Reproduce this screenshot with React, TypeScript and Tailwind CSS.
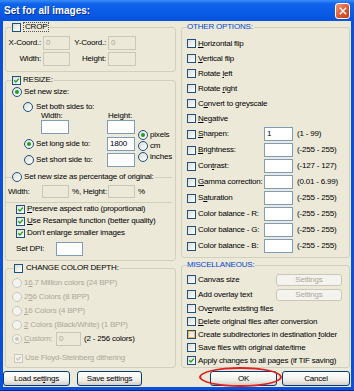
import React from 'react';

// --- SMALL XP CONTROLS ---
type BoxProps = { checked?: boolean; disabled?: boolean; hover?: boolean };

const U = ({ children }: { children: React.ReactNode }) => (
    <span className="underline underline-offset-[1px] decoration-[0.5px]">{children}</span>
);

const CheckBox = ({ checked, disabled, hover }: BoxProps) => (
    <span
        className={`relative block w-[9px] h-[9px] shrink-0 border ${
            disabled ? 'border-[#CAC8BB] bg-[#F4F3EE]' : 'border-[#1C5180] bg-[linear-gradient(135deg,#DCDCD7,#FFFFFF)]'
        }`}
    >
        {hover && <span className="absolute inset-0 border border-[#F5B54A]" />}
        {checked && (
            <svg viewBox="0 0 7 7" className="absolute left-0 top-0 w-[7px] h-[7px]">
                <path d="M1.2 3.3 L2.9 5 L5.9 1.6" fill="none" stroke={disabled ? '#C8C6B8' : '#21A121'} strokeWidth="1.4" />
            </svg>
        )}
    </span>
);

const Radio = ({ checked, disabled }: BoxProps) => (
    <span
        className={`flex items-center justify-center w-[10px] h-[10px] shrink-0 rounded-full border ${
            disabled ? 'border-[#CAC8BB] bg-[#F4F3EE]' : 'border-[#1C5180] bg-[linear-gradient(135deg,#DCDCD7,#FFFFFF)]'
        }`}
    >
        {checked && <span className={`w-[4px] h-[4px] rounded-full ${disabled ? 'bg-[#CAC8BB]' : 'bg-[#21A121]'}`} />}
    </span>
);

const Field = ({ value = '', disabled, w, h = 'h-[14px]' }: { value?: string; disabled?: boolean; w: string; h?: string }) => (
    <span
        className={`flex items-center shrink-0 ${w} ${h} border px-[2px] ${
            disabled ? 'border-[#C9C7BA] bg-[#ECE9D8] text-[#ACA899]' : 'border-[#7F9DB9] bg-white text-black'
        }`}
    >
        {value}
    </span>
);

const Btn = ({ children, w, disabled }: { children: React.ReactNode; w: string; disabled?: boolean }) => (
    <span
        className={`flex items-center justify-center shrink-0 rounded-[3px] border ${w} ${
            disabled
                ? 'h-[12px] border-[#C9C7BA] bg-[#F4F3EE] text-[#ACA899]'
                : 'h-[15px] border-[#003C74] bg-[linear-gradient(to_bottom,#FFFFFF,#F0F0EA_60%,#D6D0C5)] text-black'
        }`}
    >
        {children}
    </span>
);

// --- ROWS ---
const CheckRow = ({ label, checked, hover }: { label: React.ReactNode; checked?: boolean; hover?: boolean }) => (
    <div className="flex items-center h-[15px] pl-[3px]">
        <CheckBox checked={checked} hover={hover} />
        <span className="ml-[2px] whitespace-nowrap">{label}</span>
    </div>
);

const MiscRow = ({ label, checked, hover }: { label: React.ReactNode; checked?: boolean; hover?: boolean }) => (
    <div className="flex items-center h-[13px] pl-[3px]">
        <CheckBox checked={checked} hover={hover} />
        <span className="ml-[2px] whitespace-nowrap">{label}</span>
    </div>
);

const ValueRow = ({ label, value = '', range }: { label: React.ReactNode; value?: string; range: string }) => (
    <div className="flex items-center h-[16px] pl-[3px]">
        <CheckBox />
        <span className="ml-[2px] w-[66px] whitespace-nowrap">{label}</span>
        <Field w="w-[29px]" value={value} />
        <span className="ml-[4px] whitespace-nowrap">{range}</span>
    </div>
);

const DepthRow = ({ label, checked }: { label: React.ReactNode; checked?: boolean }) => (
    <div className="flex items-center h-[14px] pl-[4px] text-[#ACA899]">
        <Radio disabled checked={checked} />
        <span className="ml-[2px] whitespace-nowrap">{label}</span>
    </div>
);

const App = () => {
    return (
        <div className="w-[354px] h-[391px] flex flex-col bg-[#0A50DC] border-b border-[#00239A] font-['Liberation_Sans',Arial,sans-serif] text-[8px] tracking-[-0.2px] leading-none text-black overflow-hidden">
            {/* Title bar */}
            <div className="h-[21px] shrink-0 flex items-center pl-[4px] pr-[4px] bg-[linear-gradient(to_bottom,#3C8DF7_0%,#0F64EB_18%,#0A5BE6_55%,#0553DC_100%)]">
                <span className="text-white font-bold text-[10px] tracking-[0px] [text-shadow:1px_1px_0_#0B2C92]">Set for all images:</span>
                <span className="ml-auto flex items-center justify-center w-[15px] h-[16px] rounded-[3px] border border-white bg-[linear-gradient(135deg,#F0997A,#DB5A30_55%,#C2401A)]">
                    <svg viewBox="0 0 9 9" className="w-[8px] h-[8px]">
                        <path d="M1.5 1.5 L7.5 7.5 M7.5 1.5 L1.5 7.5" stroke="#FFFFFF" strokeWidth="1.6" strokeLinecap="square" />
                    </svg>
                </span>
            </div>

            {/* Dialog body */}
            <div className="flex-1 mx-[3px] mb-[3px] bg-[#ECE9D8] flex flex-col">
                <div className="flex pl-[2px]">
                    {/* Left column */}
                    <div className="flex flex-col w-[171px]">
                        {/* CROP */}
                        <fieldset className="mt-[1px] h-[50px] border border-[#D0D0BF] rounded-[3px] px-[2px] pt-[4px]">
                            <legend className="ml-[4px] h-[10px] flex items-center">
                                <CheckBox />
                                <span className="ml-[2px] px-[1px] h-[10px] flex items-center border border-dotted border-[#555]">CROP</span>
                            </legend>
                            <div className="flex items-center h-[14px]">
                                <span className="w-[33px] text-right">X-Coord.:</span>
                                <span className="ml-[2px]"><Field disabled w="w-[27px]" value="0" /></span>
                                <span className="w-[36px] text-right">Y-Coord.:</span>
                                <span className="ml-[2px]"><Field disabled w="w-[28px]" value="0" /></span>
                            </div>
                            <div className="flex items-center h-[14px] mt-[2px]">
                                <span className="w-[33px] text-right">Width:</span>
                                <span className="ml-[2px]"><Field disabled w="w-[27px]" /></span>
                                <span className="w-[36px] text-right">Height:</span>
                                <span className="ml-[2px]"><Field disabled w="w-[28px]" /></span>
                            </div>
                        </fieldset>

                        {/* RESIZE */}
                        <fieldset className="mt-[3px] h-[186px] border border-[#D0D0BF] rounded-[3px] px-[2px]">
                            <legend className="ml-[4px] h-[10px] flex items-center pr-[1px]">
                                <CheckBox checked />
                                <span className="ml-[2px]">RESIZE:</span>
                            </legend>
                            <div className="mt-[2px] h-[10px] flex items-center pl-[4px]">
                                <Radio checked />
                                <span className="ml-[2px]">Set new size:</span>
                            </div>
                            <div className="flex">
                                <div className="w-[128px] flex flex-col">
                                    <div className="mt-[5px] h-[10px] flex items-center pl-[15px]">
                                        <Radio />
                                        <span className="ml-[3px]">Set both sides to:</span>
                                    </div>
                                    <div className="h-[8px] flex items-end">
                                        <span className="ml-[33px] w-[67px]">Width:</span>
                                        <span>Height:</span>
                                    </div>
                                    <div className="h-[14px] flex">
                                        <span className="ml-[33px]"><Field w="w-[28px]" /></span>
                                        <span className="ml-[38px]"><Field w="w-[28px]" /></span>
                                    </div>
                                    <div className="mt-[3px] h-[14px] flex items-center pl-[16px]">
                                        <Radio checked />
                                        <span className="ml-[2px] w-[71px]">Set long side to:</span>
                                        <Field w="w-[28px]" value="1800" />
                                    </div>
                                    <div className="mt-[2px] h-[14px] flex items-center pl-[16px]">
                                        <Radio />
                                        <span className="ml-[2px] w-[71px]">Set short side to:</span>
                                        <Field w="w-[28px]" />
                                    </div>
                                </div>
                                <div className="ml-[2px] mt-[32px] flex flex-col">
                                    <div className="h-[11px] flex items-center"><Radio checked /><span className="ml-[2px]">pixels</span></div>
                                    <div className="h-[11px] flex items-center"><Radio /><span className="ml-[2px]">cm</span></div>
                                    <div className="h-[11px] flex items-center"><Radio /><span className="ml-[2px]">inches</span></div>
                                </div>
                            </div>

                            {/* percentage */}
                            <fieldset className="mt-[5px] -ml-[2px] w-[166px] h-[31px] border-t border-b border-[#D0D0BF] pt-[3px]">
                                <legend className="ml-[6px] h-[10px] flex items-center pr-[1px]">
                                    <Radio />
                                    <span className="ml-[2px]">Set new size as percentage of original:</span>
                                </legend>
                                <div className="h-[13px] flex items-center pl-[2px]">
                                    <span className="w-[34px]">Width:</span>
                                    <Field disabled w="w-[27px]" h="h-[13px]" />
                                    <span className="ml-[3px] w-[36px]">%, Height:</span>
                                    <Field disabled w="w-[27px]" h="h-[13px]" />
                                    <span className="ml-[3px]">%</span>
                                </div>
                            </fieldset>

                            <div className="h-[12px] flex items-center pl-[8px]">
                                <CheckBox checked />
                                <span className="ml-[2px] whitespace-nowrap"><U>P</U>reserve aspect ratio (proportional)</span>
                            </div>
                            <div className="h-[12px] flex items-center pl-[8px]">
                                <CheckBox checked />
                                <span className="ml-[2px] whitespace-nowrap"><U>U</U>se Resample function (better quality)</span>
                            </div>
                            <div className="h-[12px] flex items-center pl-[8px]">
                                <CheckBox checked />
                                <span className="ml-[2px] whitespace-nowrap">Don't enlarge smaller images</span>
                            </div>
                            <div className="mt-[3px] h-[14px] flex items-center pl-[8px]">
                                <span className="w-[40px]">Set DPI:</span>
                                <Field w="w-[27px]" />
                            </div>
                        </fieldset>

                        {/* CHANGE COLOR DEPTH */}
                        <fieldset className="mt-[2px] h-[105px] border border-[#D0D0BF] rounded-[3px] px-[2px] pt-[3px]">
                            <legend className="ml-[6px] h-[10px] flex items-center pr-[1px]">
                                <CheckBox />
                                <span className="ml-[3px]">CHANGE COLOR DEPTH:</span>
                            </legend>
                            <DepthRow label={<>1<U>6</U>.7 Million colors (24 BPP)</>} />
                            <DepthRow label={<>2<U>5</U>6 Colors (8 BPP)</>} />
                            <DepthRow label={<><U>1</U>6 Colors (4 BPP)</>} />
                            <DepthRow label={<><U>2</U> Colors (Black/White) (1 BPP)</>} />
                            <div className="flex items-center h-[14px] pl-[4px]">
                                <Radio disabled checked />
                                <span className="ml-[2px] w-[32px] text-[#ACA899]"><U>C</U>ustom:</span>
                                <Field disabled w="w-[25px]" value="0" />
                                <span className="ml-[3px]">(2 - 256 colors)</span>
                            </div>
                            <div className="mt-[5px] h-[14px] flex items-center pl-[6px] text-[#ACA899]">
                                <CheckBox disabled checked />
                                <span className="ml-[2px]">Use Floyd-Steinberg dithering</span>
                            </div>
                        </fieldset>
                    </div>

                    {/* Right column */}
                    <div className="ml-[5px] w-[169px] flex flex-col">
                        <fieldset className="mt-[1px] h-[236px] border border-[#D0D0BF] rounded-[3px] px-[2px] pt-[4px]">
                            <legend className="ml-[3px] h-[10px] flex items-center pr-[1px] text-[#0046D5]">OTHER OPTIONS:</legend>
                            <CheckRow label={<><U>H</U>orizontal flip</>} />
                            <CheckRow label={<><U>V</U>ertical flip</>} />
                            <CheckRow label={<>Rotate <U>l</U>eft</>} />
                            <CheckRow label={<>Rotate <U>r</U>ight</>} />
                            <CheckRow label={<>C<U>o</U>nvert to greyscale</>} />
                            <CheckRow label={<><U>N</U>egative</>} />
                            <ValueRow label={<><U>S</U>harpen:</>} value="1" range="(1  -  99)" />
                            <ValueRow label={<><U>B</U>rightness:</>} range="(-255  -  255)" />
                            <ValueRow label={<>Con<U>t</U>rast:</>} range="(-127  -  127)" />
                            <ValueRow label={<><U>G</U>amma correction:</>} range="(0.01  -  6.99)" />
                            <ValueRow label={<>S<U>a</U>turation</>} range="(-255  -  255)" />
                            <ValueRow label="Color balance - R:" range="(-255  -  255)" />
                            <ValueRow label="Color balance - G:" range="(-255  -  255)" />
                            <ValueRow label="Color balance - B:" range="(-255  -  255)" />
                        </fieldset>

                        <fieldset className="mt-[2px] h-[108px] border border-[#D0D0BF] rounded-[3px] px-[2px] pt-[2px]">
                            <legend className="ml-[3px] h-[10px] flex items-center pr-[1px] text-[#0046D5]">MISCELLANEOUS:</legend>
                            <div className="flex items-center h-[15px] pl-[3px]">
                                <CheckBox />
                                <span className="ml-[2px] w-[78px]">Canvas size</span>
                                <Btn w="w-[66px]" disabled>Settings</Btn>
                            </div>
                            <div className="flex items-center h-[15px] pl-[3px]">
                                <CheckBox />
                                <span className="ml-[2px] w-[78px]">Add overlay text</span>
                                <Btn w="w-[66px]" disabled>Settings</Btn>
                            </div>
                            <MiscRow label={<>Ov<U>e</U>rwrite existing files</>} />
                            <MiscRow label={<><U>D</U>elete original files after conversion</>} />
                            <MiscRow label={<>Create subdirectories in destination <U>f</U>older</>} hover />
                            <MiscRow label="Save files with original date/time" />
                            <MiscRow label="Apply changes to all pages (if TIF saving)" checked />
                        </fieldset>
                    </div>
                </div>

                {/* Buttons */}
                <div className="mt-[3px] flex h-[15px]">
                    <Btn w="w-[67px]">Load set<U>t</U>ings</Btn>
                    <span className="ml-[7px]"><Btn w="w-[65px]">Save settings</Btn></span>
                    <span className="relative ml-[68px]">
                        <Btn w="w-[67px]">OK</Btn>
                        <span className="absolute -left-[11px] -top-[4px] w-[83px] h-[20px] rounded-[50%] border-2 border-[#E0201E]" />
                    </span>
                    <span className="ml-[5px]"><Btn w="w-[68px]">Cancel</Btn></span>
                </div>
            </div>
        </div>
    );
};

export default App;
